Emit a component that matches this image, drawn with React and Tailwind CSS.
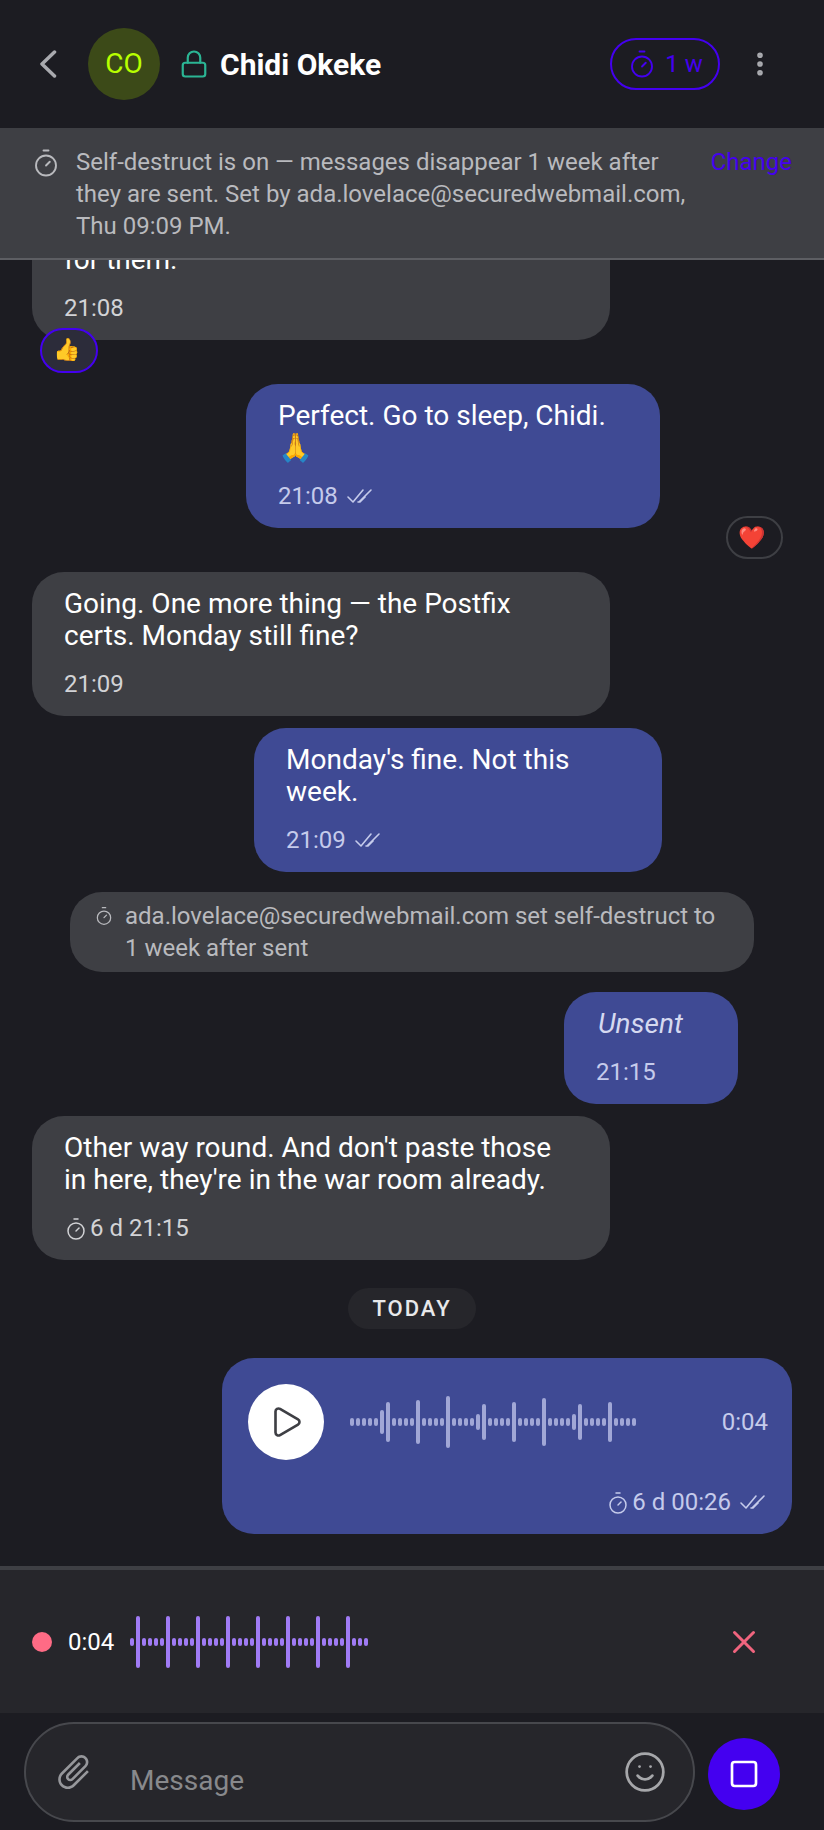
import React from 'react';
import { Lock, Timer, EllipsisVertical, Play, X, Smile, Square } from 'lucide-react';
import { MdAttachFile } from 'react-icons/md';

const playedBars = [8, 8, 8, 8, 8, 24, 40, 8, 8, 8, 8, 44, 8, 8, 8, 8, 52, 8, 8, 8, 8, 16, 36, 8, 8, 8, 8, 40, 8, 8, 8, 8, 48, 8, 8, 8, 8, 16, 36, 8, 8, 8, 8, 40, 8, 8, 8, 8];
const recBars = [8, 52, 8, 8, 8, 8, 52, 8, 8, 8, 8, 52, 8, 8, 8, 8, 52, 8, 8, 8, 8, 52, 8, 8, 8, 8, 52, 8, 8, 8, 8, 52, 8, 8, 8, 8, 52, 8, 8, 8];

const Wave = ({ bars, color, className }) => (
  <svg width={bars.length * 6} height="56" viewBox={`0 0 ${bars.length * 6} 56`} className={className}>
    {bars.map((h, i) => (
      <rect key={i} x={i * 6} y={28 - h / 2} width="4" height={h} rx="2" fill={color} />
    ))}
  </svg>
);

const Ticks = ({ className = '' }) => (
  <svg width="28" height="18" viewBox="0 0 28 18" fill="none" stroke="currentColor" strokeWidth="1.6" strokeLinecap="round" strokeLinejoin="round" className={className}>
    <path d="M2 10l5 5L17 3" />
    <path d="M12 15h1L25 3" />
    <path d="M14 15l5-5" />
  </svg>
);

const Bubble = ({ mine, className = '', children }) => (
  <div className={`rounded-[32px] px-8 py-4 text-[28px] leading-8 text-white ${mine ? 'bg-[#3f4a94]' : 'bg-[#3e3f44]'} ${className}`}>
    {children}
  </div>
);

const Meta = ({ mine, children }) => (
  <div className={`mt-4 flex h-8 items-center text-[24px] ${mine ? 'text-[#c5cbeb]' : 'text-[#d2d3d6]'}`}>{children}</div>
);

const App = () => {
  return (
    <div className="flex h-[1830px] w-[824px] flex-col overflow-hidden bg-[#1c1c22] font-['Roboto',sans-serif]">
      <header className="flex h-[128px] shrink-0 items-center pl-[39px] pr-[49px]">
        <svg width="18" height="28" viewBox="0 0 18 28" fill="none" stroke="#a9aaaf" strokeWidth="3.5" strokeLinecap="round" strokeLinejoin="round">
          <path d="M15.5 2L3 14l12.5 12" />
        </svg>
        <div className="ml-[31px] flex h-[72px] w-[72px] items-center justify-center rounded-full bg-[#3c4a18] text-[28px] text-[#b8ff00]">CO</div>
        <Lock size={30} strokeWidth={1.75} className="ml-[19px] text-[#2bb594]" />
        <div className="ml-[11px] text-[30px] font-bold text-white">Chidi Okeke</div>
        <div className="ml-auto flex h-[52px] w-[110px] items-center justify-center gap-[8px] rounded-full border-2 border-[#4400f0] text-[24px] text-[#4400f0]">
          <Timer size={30} strokeWidth={1.5} />
          <span>1 w</span>
        </div>
        <EllipsisVertical size={30} strokeWidth={2.5} className="ml-[25px] text-[#a9aaaf]" />
      </header>

      <div className="z-10 flex h-[132px] shrink-0 items-start border-b-2 border-[#5d5e63] bg-[#3e3f44] pl-[31px] pr-[32px] pt-[18px] text-[24px] leading-8 text-[#b9babe]">
        <Timer size={30} strokeWidth={1.5} className="mt-[2px] shrink-0" />
        <p className="ml-[15px] w-[620px]">Self-destruct is on — messages disappear 1 week after they are sent. Set by ada.lovelace@securedwebmail.com, Thu 09:09 PM.</p>
        <span className="ml-auto text-[#4400f0]">Change</span>
      </div>

      <main className="flex min-h-0 flex-1 flex-col overflow-hidden">
        <Bubble className="ml-8 -mt-8 w-[578px] shrink-0">
          for them.
          <Meta>21:08</Meta>
        </Bubble>
        <div className="relative ml-[40px] -mt-[12px] flex h-[45px] w-[58px] shrink-0 items-center justify-center rounded-full border-2 border-[#4400f0] bg-[#2c2c3a] pb-[3px] pr-[6px] text-[22px]">👍</div>

        <Bubble mine className="ml-[246px] mt-[11px] w-[414px] shrink-0">
          Perfect. Go to sleep, Chidi. 🙏
          <Meta mine>21:08 <Ticks className="ml-[8px]" /></Meta>
        </Bubble>
        <div className="relative ml-[726px] -mt-[12px] flex h-[43px] w-[57px] shrink-0 items-center justify-center rounded-full border-2 border-[#3e3f44] bg-[#1c1c22] pr-[6px] text-[22px]">❤️</div>

        <Bubble className="ml-8 mt-[13px] w-[578px] shrink-0">
          Going. One more thing — the Postfix certs. Monday still fine?
          <Meta>21:09</Meta>
        </Bubble>

        <Bubble mine className="ml-[254px] mt-3 w-[408px] shrink-0">
          Monday's fine. Not this week.
          <Meta mine>21:09 <Ticks className="ml-[8px]" /></Meta>
        </Bubble>

        <div className="ml-[70px] mt-5 flex w-[684px] shrink-0 items-start rounded-[32px] bg-[#3e3f44] py-2 pl-[24px] pr-[32px] text-[24px] leading-8 text-[#b9babe]">
          <Timer size={20} strokeWidth={1.5} className="mt-[6px] shrink-0" />
          <p className="ml-[11px]">ada.lovelace@securedwebmail.com set self-destruct to 1 week after sent</p>
        </div>

        <Bubble mine className="ml-[564px] mt-5 w-[174px] shrink-0">
          <span className="pl-[2px] italic text-[#d5d9f0]">Unsent</span>
          <Meta mine>21:15</Meta>
        </Bubble>

        <Bubble className="ml-8 mt-3 w-[578px] shrink-0">
          Other way round. And don't paste those in here, they're in the war room already.
          <Meta>
            <Timer size={24} strokeWidth={1.5} className="mr-[2px] mt-[2px]" />
            6 d 21:15
          </Meta>
        </Bubble>

        <div className="mt-[28px] flex h-[41px] w-[128px] shrink-0 items-center justify-center self-center rounded-full bg-[#26262b] text-[22px] font-medium tracking-[2px] text-[#e8e8ea]">TODAY</div>

        <Bubble mine className="ml-[222px] mt-[29px] flex h-[176px] w-[570px] shrink-0 flex-col !p-0">
          <div className="flex items-center pl-[26px] pr-[24px] pt-[26px]">
            <div className="flex h-[76px] w-[76px] items-center justify-center rounded-full bg-white">
              <Play size={36} strokeWidth={1.75} className="text-[#3e3f44]" />
            </div>
            <Wave bars={playedBars} color="#a1a7d6" className="ml-[26px]" />
            <span className="ml-auto text-[24px] text-[#c5cbeb]">0:04</span>
          </div>
          <div className="mt-[26px] flex h-8 items-center justify-end pr-[25px] text-[24px] text-[#c5cbeb]">
            <Timer size={24} strokeWidth={1.5} className="mr-[2px] mt-[2px]" />
            6 d 00:26
            <Ticks className="ml-[8px]" />
          </div>
        </Bubble>
      </main>

      <div className="flex h-[147px] shrink-0 items-center border-t-4 border-[#3e3f44] bg-[#26262b] pl-8 pr-[61px]">
        <div className="h-[20px] w-[20px] rounded-full bg-[#ff6b85]" />
        <span className="ml-[16px] text-[24px] text-white">0:04</span>
        <Wave bars={recBars} color="#a07bf5" className="ml-[16px]" />
        <X size={38} strokeWidth={1.9} className="ml-auto text-[#f0647e]" />
      </div>

      <div className="flex h-[117px] shrink-0 items-start bg-[#1c1c22] pl-[24px] pt-[9px]">
        <div className="flex h-[100px] w-[671px] items-center rounded-full border-2 border-[#47484d] bg-[#26262b] pl-[27px] pr-[26px]">
          <MdAttachFile size={42} className="rotate-45 text-[#96979b]" />
          <span className="ml-[35px] mt-[18px] text-[28px] text-[#88898c]">Message</span>
          <Smile size={44} strokeWidth={1.5} className="ml-auto text-[#a6a7aa]" />
        </div>
        <div className="ml-[13px] mt-[16px] flex h-[72px] w-[72px] items-center justify-center rounded-full bg-[#4400f0]">
          <Square size={32} strokeWidth={2} className="text-white" />
        </div>
      </div>
    </div>
  );
};

export default App;
